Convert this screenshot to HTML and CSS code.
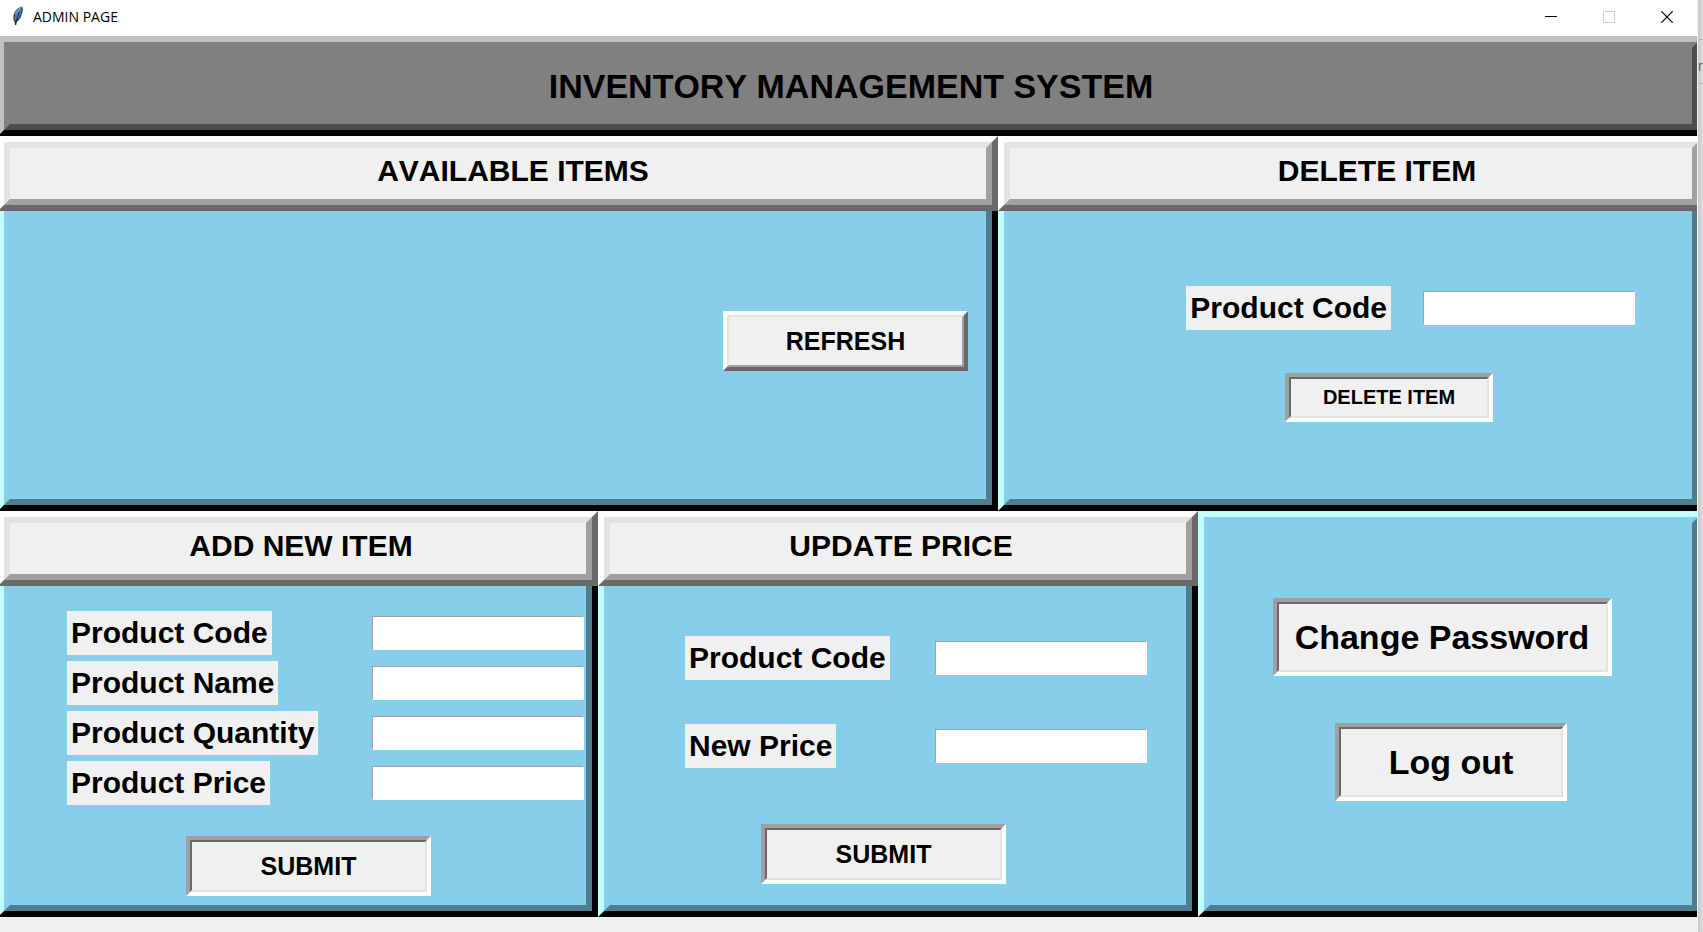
FILE: index.html
```html
<!DOCTYPE html>
<html lang="en">
<head>
<meta charset="utf-8">
<title>ADMIN PAGE</title>
<link rel="stylesheet" href="styles.css">
</head>
<body>
<div class="desktop">
  <main class="window">
    <header class="titlebar">
      <svg class="feather" viewBox="0 0 12 20" aria-hidden="true">
        <path d="M10.5 0.5C6 1 2.500 5 1.500 9.500C1 12 1.500 14 2.500 16L3 19L4.200 19L4.500 16C7 14.500 9 12 9.500 9C10.500 6.500 11.500 3 10.500 0.500Z" fill="#3d4650"/>
        <path d="M9.500 1.500C6.500 3 4 6 3 10C2.600 12 2.800 13.500 3.500 14.500C6.500 12.500 8 10 8.600 7.500Z" fill="#4a86c8"/>
        <path d="M9.800 1.200C7 2.500 4.500 5 3.200 8" fill="none" stroke="#a9b4bf" stroke-width="1"/>
        <path d="M7.500 6C6.500 8 4.500 12 3.600 19" fill="none" stroke="#16202c" stroke-width="1"/>
      </svg>
      <span class="caption">ADMIN PAGE</span>
      <button class="winbtn" aria-label="Minimize"><svg viewBox="0 0 12 12"><path d="M0 5.500H12" stroke="#000"/></svg></button>
      <button class="winbtn" aria-label="Maximize" disabled><svg viewBox="0 0 12 12"><path d="M.5 .5H11.500V11.500H.5Z" fill="none" stroke="#ccc"/></svg></button>
      <button class="winbtn" aria-label="Close"><svg viewBox="0 0 12 12"><path d="M.3 .3L11.700 11.700M11.700 .3L.3 11.700" stroke="#000" stroke-width="1.200"/></svg></button>
    </header>
    <div class="client">
      <div class="banner"><h1 class="banner-text">INVENTORY MANAGEMENT SYSTEM</h1></div>

      <div class="row row-top">
        <section class="panel">
          <div class="heading"><h2 class="heading-text heading-items">AVAILABLE ITEMS</h2></div>
          <div class="frame"><div class="body items">
            <button class="btn raised medium">REFRESH</button>
          </div></div>
        </section>
        <section class="panel">
          <div class="heading"><h2 class="heading-text heading-delete">DELETE ITEM</h2></div>
          <div class="frame"><form class="body delete">
            <div class="inline-field">
              <label class="tag" for="del-code">Product Code</label>
              <input class="entry" id="del-code" type="text">
            </div>
            <button class="btn small" type="button">DELETE ITEM</button>
          </form></div>
        </section>
      </div>

      <div class="row row-bottom">
        <section class="panel">
          <div class="heading"><h2 class="heading-text">ADD NEW ITEM</h2></div>
          <div class="frame"><form class="body add">
            <div class="fields">
              <label class="tag" for="add-code">Product Code</label>
              <input class="entry" id="add-code" type="text">
              <label class="tag" for="add-name">Product Name</label>
              <input class="entry" id="add-name" type="text">
              <label class="tag" for="add-qty">Product Quantity</label>
              <input class="entry" id="add-qty" type="text">
              <label class="tag" for="add-price">Product Price</label>
              <input class="entry" id="add-price" type="text">
            </div>
            <button class="btn medium" type="button">SUBMIT</button>
          </form></div>
        </section>
        <section class="panel">
          <div class="heading"><h2 class="heading-text">UPDATE PRICE</h2></div>
          <div class="frame"><form class="body update">
            <div class="fields">
              <label class="tag" for="upd-code">Product Code</label>
              <input class="entry" id="upd-code" type="text">
              <label class="tag" for="upd-price">New Price</label>
              <input class="entry" id="upd-price" type="text">
            </div>
            <button class="btn medium" type="button">SUBMIT</button>
          </form></div>
        </section>
        <section class="panel">
          <div class="frame open"><div class="body account">
            <button class="btn large">Change Password</button>
            <button class="btn large logout">Log out</button>
          </div></div>
        </section>
      </div>
    </div>
  </main>
  <aside class="behind"><div class="behind-bar">ry</div></aside>
</div>
</body>
</html>
```
FILE: styles.css
```css
* { box-sizing: border-box; }

body {
  margin: 0;
  background: #f0f0f0;
  color: #000;
  font-family: "Liberation Sans", Arial, sans-serif;
  font-kerning: none;
}

.desktop {
  display: grid;
  grid-template-columns: minmax(0, 1fr) 5px;
  min-height: 100vh;
}

.window {
  display: flex;
  flex-direction: column;
  border-right: 1px solid #f4f4f4;
  overflow: hidden;
}

/* Title bar */
.titlebar {
  display: flex;
  align-items: center;
  height: 36px;
  padding: 0 1px 4px 12px;
  background: #fff;
}
.feather { width: 12px; height: 20px; }
.caption {
  flex: 1;
  margin-left: 9px;
  padding-top: 2px;
  font: 14px/20px "Open Sans", "Noto Sans", sans-serif;
}
.winbtn {
  width: 58px;
  height: 32px;
  padding: 0;
  border: 0;
  background: none;
}
.winbtn svg { display: block; width: 12px; height: 12px; margin: 2px auto 0; }

/* The client area is slightly wider than the window, so its side bevels are cut */
.client {
  flex: 1;
  display: flex;
  flex-direction: column;
  margin: 0 -7px 0 -2px;
  padding-bottom: 15px;
}

.banner {
  border: 6px solid;
  border-color: #c0c0c0 #000 #000 #c0c0c0;
}
.banner-text {
  margin: 0;
  padding: 18px 0;
  border: 6px solid;
  border-color: #808080 #4d4d4d #4d4d4d #808080;
  background: #808080;
  font-size: 34px;
  line-height: 40px;
  text-align: center;
}

.row { display: grid; }
.row-top { flex: 375 1 0; grid-template-columns: 1000fr 706fr; }
.row-bottom { flex: 406 1 0; grid-template-columns: 600fr 600fr 506fr; }

.panel { display: flex; flex-direction: column; min-width: 0; }

.heading {
  border: 6px solid;
  border-color: #fff #696969 #696969 #fff;
}
.heading-text {
  margin: 0;
  padding: 5px 0 10px 6px;
  border: 6px solid;
  border-color: #e3e3e3 #a0a0a0 #a0a0a0 #e3e3e3;
  background: #f0f0f0;
  font-size: 30px;
  line-height: 36px;
  text-align: center;
}
.heading-items { padding-left: 30px; }
.heading-delete { padding-left: 52px; }

.frame {
  flex: 1;
  display: flex;
  border: 6px solid;
  border-color: #c3ffff #000 #000 #c3ffff;
  border-top: 0;
}
.body {
  flex: 1;
  display: flex;
  flex-direction: column;
  min-width: 0;
  border: 6px solid;
  border-color: #87ceeb #517c8d #517c8d #87ceeb;
  border-top: 0;
  background: #87ceeb;
}
.open { border-top: 6px solid #c3ffff; }
.open .body { border-top: 6px solid #87ceeb; }

/* Controls */
.tag {
  padding: 4px;
  background: #f0f0f0;
  font-size: 30px;
  font-weight: bold;
  line-height: 36px;
  white-space: nowrap;
}
.entry {
  width: 212px;
  height: 34px;
  padding: 2px 4px;
  border: 1px solid;
  border-color: #a0a0a0 #fff #fff #a0a0a0;
  border-radius: 0;
  background: #fff;
  font: 20px "Liberation Sans", Arial, sans-serif;
}
.btn {
  position: relative;
  padding: 0;
  border: 4px solid;
  border-color: #a0a0a0 #fff #fff #a0a0a0;
  background: #f0f0f0;
  color: #000;
  font-family: inherit;
  font-weight: bold;
}
.btn::before {
  content: "";
  position: absolute;
  inset: 0;
  border: 2px solid;
  border-color: #696969 #e3e3e3 #e3e3e3 #696969;
}
.raised { border-color: #fff #696969 #696969 #fff; }
.raised::before { border-color: #e3e3e3 #a0a0a0 #a0a0a0 #e3e3e3; }
.small { width: 208px; height: 49px; font-size: 20px; }
.medium { width: 245px; height: 60px; font-size: 25px; }
.large { width: 339px; height: 78px; font-size: 34px; }
.logout { width: 232px; margin-left: 18px; }

.fields {
  display: grid;
  grid-template-columns: 1fr auto;
  align-items: center;
  justify-items: start;
}

/* Panel contents */
.items { align-items: flex-end; padding: 100px 18px 0 0; }

.delete { align-items: flex-end; gap: 43px; padding: 75px 57px 0 0; }
.delete .btn { margin-right: 142px; }
.inline-field { display: flex; align-items: center; gap: 32px; }

.add { gap: 31px; padding: 25px 2px 0 57px; }
.add .fields { row-gap: 6px; }
.add .btn { margin-left: 119px; }

.update { gap: 56px; padding: 50px 39px 0 75px; }
.update .fields { row-gap: 44px; }
.update .btn { margin-left: 76px; }

.account { align-items: center; gap: 47px; padding: 75px 18px 0 0; }

/* Sliver of the window lying behind */
.behind {
  overflow: hidden;
  padding-top: 39px;
  background: linear-gradient(90deg, #c8c8c8, #dedede);
}
.behind-bar {
  height: 45px;
  padding-top: 16px;
  border: solid #b0b0b0;
  border-width: 1px 0;
  color: #666;
  font-size: 14px;
  line-height: 20px;
}
```
